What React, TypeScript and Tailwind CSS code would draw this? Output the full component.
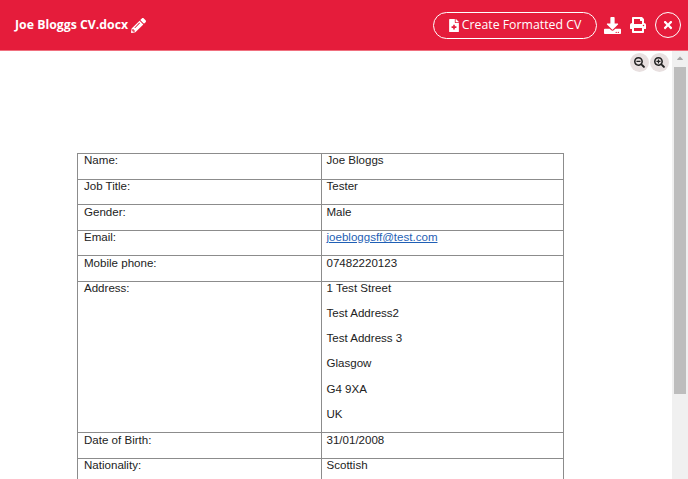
import {
  FaCaretUp,
  FaDownload,
  FaFileMedical,
  FaPencilAlt,
  FaPrint,
  FaSearchMinus,
  FaSearchPlus,
  FaTimes,
} from "react-icons/fa";

const rows = [
  { label: "Name:", value: "Joe Bloggs" },
  { label: "Job Title:", value: "Tester" },
  { label: "Gender:", value: "Male" },
  { label: "Email:", value: "joebloggsff@test.com", link: true },
  { label: "Mobile phone:", value: "07482220123" },
];

const address = ["1 Test Street", "Test Address2", "Test Address 3", "Glasgow", "G4 9XA", "UK"];

function Row({ label, children }: { label: string; children: React.ReactNode }) {
  return (
    <tr className="align-top">
      <td className="h-[25.6px] border border-[#8c8c8c] pl-[6px] pt-[0.4px] leading-[13px]">{label}</td>
      <td className="border border-[#8c8c8c] pl-[5px] pt-[0.4px] leading-[13px]">{children}</td>
    </tr>
  );
}

export default function App() {
  return (
    <div className="flex h-[479px] w-[688px] flex-col overflow-hidden bg-white">
      <header className="flex h-[51px] shrink-0 items-center justify-between border-b border-[#f0707f] bg-[#e51c3b] pl-[15px] pr-[7px] font-['Open_Sans',sans-serif] text-white">
        <div className="flex items-center gap-[3px] text-[12.3px] font-bold">
          Joe Bloggs CV.docx
          <FaPencilAlt className="h-[15px] w-[15px]" />
        </div>
        <div className="flex items-center">
          <button
            type="button"
            className="flex h-[27px] w-[164px] items-center justify-center gap-[3px] rounded-full border border-white text-[12.3px]"
          >
            <FaFileMedical className="h-[13px] w-[10px]" />
            Create Formatted CV
          </button>
          <FaDownload className="ml-[7px] h-[17px] w-[17px]" />
          <FaPrint className="ml-[9px] h-[16px] w-[16px]" />
          <button
            type="button"
            className="ml-[9px] flex h-[26px] w-[26px] items-center justify-center rounded-full border border-white"
          >
            <FaTimes className="h-[12px] w-[12px]" />
          </button>
        </div>
      </header>

      <div className="flex min-h-0 flex-1">
        <main className="relative flex-1 overflow-hidden pl-[77px] pt-[102px] font-['Liberation_Sans',sans-serif] text-[11.55px] text-[#222]">
          <div className="absolute right-[3px] top-[2px] flex gap-px">
            <span className="flex h-[19px] w-[19px] items-center justify-center rounded-full bg-[#e8e0e0] text-[#222]">
              <FaSearchMinus className="h-[11px] w-[11px]" />
            </span>
            <span className="flex h-[19px] w-[19px] items-center justify-center rounded-full bg-[#e8e0e0] text-[#222]">
              <FaSearchPlus className="h-[11px] w-[11px]" />
            </span>
          </div>

          <table className="w-[487px] table-fixed border-collapse">
            <colgroup>
              <col className="w-[243.5px]" />
              <col />
            </colgroup>
            <tbody>
              {rows.map((row) => (
                <Row key={row.label} label={row.label}>
                  {row.link ? <a className="text-[#1f5fb5] underline">{row.value}</a> : row.value}
                </Row>
              ))}
              <Row label="Address:">
                <div className="-mt-[0.4px] flex flex-col gap-[12.15px]">
                  {address.map((line) => (
                    <div key={line}>{line}</div>
                  ))}
                </div>
                <div className="h-[11.5px]" />
              </Row>
              <Row label="Date of Birth:">31/01/2008</Row>
              <Row label="Nationality:">Scottish</Row>
            </tbody>
          </table>
        </main>

        <div className="flex w-[16px] shrink-0 flex-col items-center bg-[#f0f0f0]">
          <FaCaretUp className="mt-[2px] h-[10px] w-[10px] text-[#a6a6a6]" />
          <div className="mt-[4px] h-[327px] w-[12px] bg-[#bdbdbd]" />
        </div>
      </div>
    </div>
  );
}
